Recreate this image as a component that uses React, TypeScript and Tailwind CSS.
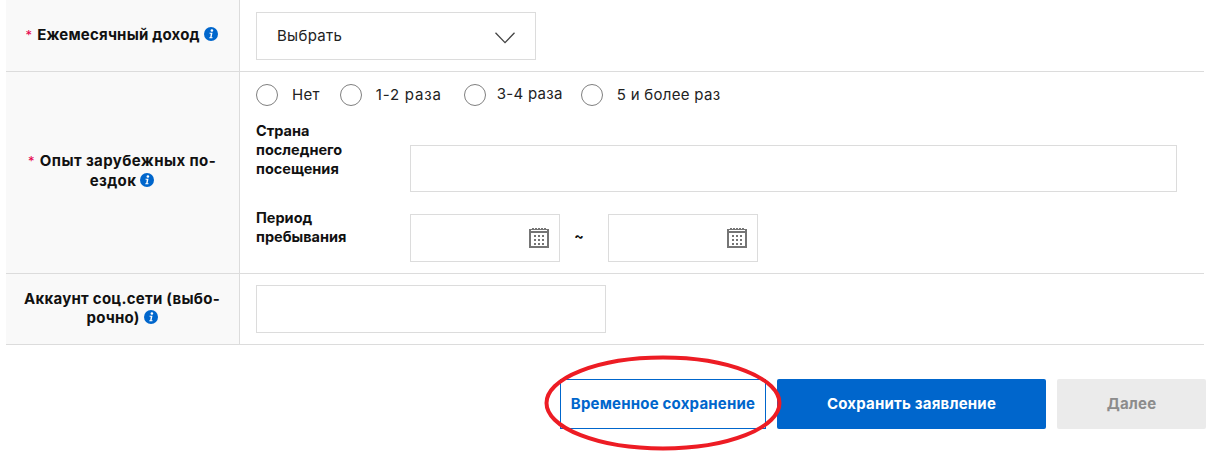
import React from 'react';

const font = { fontFamily: 'Inter, "Noto Sans", sans-serif' };

const InfoIcon = ({ className = '' }: { className?: string }) => (
  <svg viewBox="0 0 14 14" className={`inline-block w-[14px] h-[14px] align-[-1px] ${className}`}>
    <circle cx="7" cy="7" r="7" fill="#0066cc" />
    <circle cx="7.9" cy="3.5" r="1.3" fill="#fff" />
    <path d="M5.4 5.8h3.1L7.6 10.3h1l-.2 1H5.2l.2-1h.8l.6-3.5h-1.1z" fill="#fff" />
  </svg>
);

const CalendarIcon = () => (
  <svg viewBox="0 0 20 20" className="w-5 h-5" fill="#757575" shapeRendering="crispEdges">
    <path fillRule="evenodd" d="M0 1h20v19H0zM2 5v13h16V5z" />
    {[3, 6, 9, 12, 15].map((x) => (
      <rect key={x} x={x} y="0" width="2" height="1" />
    ))}
    {[7, 11, 15].map((y) =>
      [5, 9, 13].map((x) => <rect key={`${x}-${y}`} x={x} y={y} width="2" height="2" />)
    )}
    <rect x="2" y="2" width="16" height="1" fill="#fff" />
  </svg>
);

const Radio = ({ label, className = '', labelClass = '' }: { label: string; className?: string; labelClass?: string }) => (
  <label className={`flex items-center ${className}`}>
    <span className="w-[22px] h-[22px] rounded-full border border-[#808080] bg-white" />
    <span className={`text-[15px] text-[#222] tracking-[0.3px] ${labelClass}`}>{label}</span>
  </label>
);

const Required = () => <span className="text-[#e6004c] text-[13px] font-normal mr-[5px]">*</span>;

const RowLabel = ({ children, className = '' }: { children: React.ReactNode; className?: string }) => (
  <div className={`w-[234px] shrink-0 bg-[#f9f9f9] border-r border-[#dcdcdc] flex items-center justify-center text-center text-[15px] leading-[19px] font-bold text-[#111] ${className}`}>
    <div>{children}</div>
  </div>
);

const DateInput = () => (
  <div className="w-[150px] h-[48px] mt-[6px] border border-[#dcdcdc] flex items-center justify-end pr-[10px]">
    <CalendarIcon />
  </div>
);

const App = () => {
  return (
    <div className="relative w-[1220px] h-[463px] bg-white overflow-hidden" style={font}>
      <div className="ml-[6px] w-[1198px]">
        {/* income */}
        <div className="flex h-[72px] border-b border-[#dcdcdc]">
          <RowLabel className="pb-[1px] pr-[2px] whitespace-nowrap tracking-[0.2px]">
            <Required />Ежемесячный доход <InfoIcon />
          </RowLabel>
          <div className="pl-4 pt-3">
            <div className="w-[280px] h-[48px] border border-[#dcdcdc] flex items-center justify-between pl-5 pr-5 text-[15px] tracking-[0.3px] text-[#222]">
              <span className="mt-[1px]">Выбрать</span>
              <svg viewBox="0 0 20 12" className="w-5 h-3 mt-[4px]" fill="none">
                <path d="M0.5 0.8 10 10.6 19.5 0.8" stroke="#444" strokeWidth="1.3" />
              </svg>
            </div>
          </div>
        </div>

        {/* trips */}
        <div className="flex h-[202px] border-b border-[#dcdcdc]">
          <RowLabel className="pb-[4px] pr-[1px] whitespace-nowrap tracking-[0.4px]">
            <Required />Опыт зарубежных по-<br />ездок <InfoIcon />
          </RowLabel>
          <div className="pl-4 pt-[12px] flex-1">
            <div className="flex gap-5 h-[22px] items-center">
              <Radio label="Нет" className="gap-3.5" />
              <Radio label="1-2 раза" className="gap-3.5" labelClass="tracking-[0.8px]" />
              <Radio label="3-4 раза" className="gap-[11px] ml-[2px] -mt-[1px]" />
              <Radio label="5 и более раз" className="gap-3.5 -ml-[2px]" />
            </div>
            <div className="flex items-start mt-[15px]">
              <div className="w-[154px] text-[14.5px] leading-[19px] font-bold text-[#111]">
                Страна<br />последнего<br />посещения
              </div>
              <div className="w-[767px] h-[47px] mt-[24px] border border-[#dcdcdc]" />
            </div>
            <div className="flex items-start mt-[16px]">
              <div className="w-[154px] text-[14.5px] leading-[19px] font-bold text-[#111]">
                Период<br />пребывания
              </div>
              <DateInput />
              <div className="w-[48px] pr-[10px] mt-[6px] text-center text-[14px] leading-[44px] font-bold text-[#111]">~</div>
              <DateInput />
            </div>
          </div>
        </div>

        {/* social */}
        <div className="flex h-[71px] border-b border-[#dcdcdc]">
          <RowLabel className="pb-[2px] pr-[1px] whitespace-nowrap tracking-[0.25px]">
            Аккаунт соц.сети (выбо-<br />рочно) <InfoIcon />
          </RowLabel>
          <div className="pl-4 pt-[11px]">
            <div className="w-[350px] h-[48px] border border-[#dcdcdc]" />
          </div>
        </div>

        {/* actions */}
        <div className="flex justify-end gap-[11px] mt-[34px] -mr-[2px] text-[15px] tracking-[0.2px] font-bold">
          <button className="w-[206px] h-[50px] border border-[#0066cc] text-[#0066cc] bg-white">Временное сохранение</button>
          <button className="w-[269px] h-[50px] rounded-[2px] bg-[#0066cc] text-white">Сохранить заявление</button>
          <button className="w-[149px] h-[50px] rounded-[2px] bg-[#ebebeb] text-[#8c8c8c]">Далее</button>
        </div>
      </div>

      {/* red marker */}
      <svg className="absolute left-[540px] top-[350px] pointer-events-none" width="250" height="105" viewBox="0 0 250 105" fill="none">
        <ellipse cx="123" cy="53" rx="116.5" ry="45.5" stroke="#ed1c24" strokeWidth="4" />
      </svg>
    </div>
  );
};

export default App;
